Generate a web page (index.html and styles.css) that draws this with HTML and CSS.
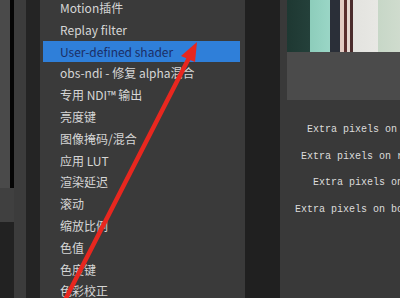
FILE: index.html
```html
<!DOCTYPE html>
<html>
<head>
<meta charset="utf-8">
<link rel="stylesheet" href="styles.css">
</head>
<body>
<div class="screen">
  <div class="col-left">
    <div class="lt-top"><div class="lt-gray"></div><div class="lt-black"></div></div>
    <div class="lt-mid"></div>
    <div class="lt-bot"></div>
  </div>
  <div class="col-strip"></div>
  <div class="col-dark"></div>
  <div class="menu">
    <ul class="items">
      <li>Motion插件</li>
      <li>Replay filter</li>
      <li class="sel">User-defined shader</li>
      <li>obs-ndi - 修复 alpha混合</li>
      <li>专用 NDI™ 输出</li>
      <li>亮度键</li>
      <li>图像掩码/混合</li>
      <li>应用 LUT</li>
      <li>渲染延迟</li>
      <li>滚动</li>
      <li>缩放比例</li>
      <li>色值</li>
      <li>色度键</li>
      <li>色彩校正</li>
    </ul>
  </div>
  <div class="gap-dark"></div>
  <div class="panel">
    <div class="preview"></div>
    <div class="preview-bg"></div>
    <div class="labels">
      <div class="lbl">Extra pixels on left</div>
      <div class="lbl">Extra pixels on right</div>
      <div class="lbl">Extra pixels on top</div>
      <div class="lbl">Extra pixels on bottom</div>
    </div>
  </div>
  <svg class="arrow" width="400" height="298" viewBox="0 0 400 298">
    <line x1="64" y1="302" x2="190" y2="56" stroke="#e8271f" stroke-width="4.5" stroke-linecap="round"/>
    <polygon points="197,42 181,56 195,62" fill="#e8271f"/>
  </svg>
</div>
</body>
</html>
```
FILE: styles.css
```css
html, body { margin: 0; padding: 0; background: #222; }
.screen {
  position: relative;
  width: 400px; height: 298px;
  overflow: hidden;
  display: flex;
  font-family: "Noto Sans CJK SC", "Noto Sans", sans-serif;
}
.col-left { width: 14px; display: flex; flex-direction: column; }
.lt-top { height: 188px; display: flex; }
.lt-gray { width: 10px; background: #4a4a4a; }
.lt-black { width: 4px; background: #050505; }
.lt-mid { height: 34px; background: #404040; }
.lt-bot { flex: 1; background: #222; }
.col-strip { width: 12px; background: #3c3c3c; }
.col-dark { width: 14px; background: #242424; }
.menu { width: 205px; background: #3a3a3a; }
.items { list-style: none; margin: -3px 0 0 0; padding: 0 5px 0 3px; }
.items li {
  height: 21.8px; line-height: 21.8px;
  padding-left: 17px;
  font-size: 12px; color: #d6d6d6;
  white-space: nowrap; overflow: hidden;
}
.items li.sel { background: #2f7fd9; color: #1b2e66; }
.gap-dark { width: 35px; background: #202020; }
.panel { flex: 1; background: #393939; padding-left: 7px; overflow: hidden; }
.preview {
  height: 52px; width: 200px;
  background: linear-gradient(90deg,
    #1e3832 0, #24403a 23px,
    #8dcdbb 23px, #9ad6c6 43px,
    #2a2f38 43px, #2a2f38 53px,
    #e2cbc3 53px, #e2cbc3 57px,
    #5a2e2e 57px, #5a2e2e 60px,
    #e6d8d2 60px, #e6d8d2 63px,
    #4a2c2c 63px, #4a2c2c 66px,
    #e3e3df 66px, #e8e8e4 91px,
    #c7d7c7 91px, #d2ddd0 120px);
}
.preview-bg { height: 48px; width: 200px; background: #4b4b4b; }
.labels {
  width: 140px;
  padding-top: 17px;
  font-family: "Liberation Mono", monospace;
  font-size: 10px;
  color: #dcdcdc;
}
.lbl { height: 26.7px; line-height: 26px; text-align: right; white-space: nowrap; }
.arrow { position: absolute; left: 0; top: 0; }
```
